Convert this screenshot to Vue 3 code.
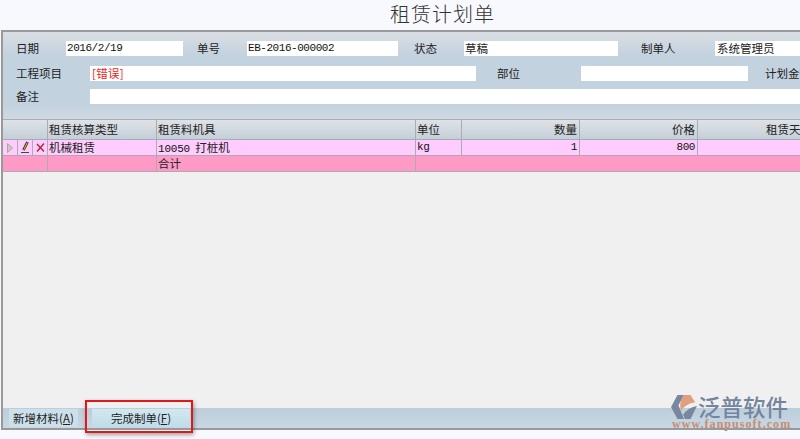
<script setup>
const columns = [15, 15, 15, 109, 259, 46, 118, 118, 117]
const gridTemplate = columns.map((w) => w + 'px').join(' ')
</script>

<template>
  <div class="page">
    <h1 class="title">租赁计划单</h1>
    <div class="window">
      <section class="form">
        <div class="row row-1">
          <span class="label w50">日期</span>
          <span class="field f1 mono">2016/2/19</span>
          <span class="label l2">单号</span>
          <span class="field f2 mono">EB-2016-000002</span>
          <span class="label l3">状态</span>
          <span class="field f3">草稿</span>
          <span class="label l4">制单人</span>
          <span class="field f4">系统管理员</span>
        </div>
        <div class="row row-2">
          <span class="label w74">工程项目</span>
          <span class="field f5 error">[错误]</span>
          <span class="label l5">部位</span>
          <span class="field f6"></span>
          <span class="label l6">计划金额</span>
        </div>
        <div class="row row-3">
          <span class="label w74">备注</span>
          <span class="field f7"></span>
        </div>
      </section>

      <section class="grid" :style="{ gridTemplateColumns: gridTemplate }">
        <div class="cell head span3"></div>
        <div class="cell head">租赁核算类型</div>
        <div class="cell head">租赁料机具</div>
        <div class="cell head">单位</div>
        <div class="cell head right">数量</div>
        <div class="cell head right">价格</div>
        <div class="cell head right">租赁天数</div>

        <div class="cell data icon">
          <svg width="10" height="12" viewBox="0 0 10 12"><path d="M2.5 1.5 L7.5 6 L2.5 10.5 Z" fill="#c9ccbc" stroke="#a8a89c" /></svg>
        </div>
        <div class="cell data icon">
          <svg width="12" height="13" viewBox="0 0 12 13"><path d="M8.5 1 L4.5 9" stroke="#222" stroke-width="2.6" /><path d="M8.4 1.4 L4.8 8.6" stroke="#f5dc20" stroke-width="1" /><path d="M2 11.5 H10" stroke="#444" stroke-width="1" /></svg>
        </div>
        <div class="cell data icon">
          <svg width="11" height="11" viewBox="0 0 11 11"><path d="M2 2 L9 9.5 M9 1.5 L2 9.5" stroke="#b02028" stroke-width="1.3" /></svg>
        </div>
        <div class="cell data">机械租赁</div>
        <div class="cell data"><span class="mono code">10050</span>&nbsp;&nbsp;打桩机</div>
        <div class="cell data mono">kg</div>
        <div class="cell data right mono">1</div>
        <div class="cell data right mono">800</div>
        <div class="cell data"></div>

        <div class="cell total span3"></div>
        <div class="cell total"></div>
        <div class="cell total">合计</div>
        <div class="cell total span4"></div>
      </section>

      <div class="blank"></div>

      <footer class="footer">
        <button class="btn btn-add">新增材料(<u>A</u>)</button>
        <button class="btn btn-done">完成制单(<u>F</u>)</button>
      </footer>
    </div>

    <div class="highlight"></div>

    <div class="logo">
      <svg class="logo-mark" width="28" height="26" viewBox="0 0 30 28">
        <path d="M8 1 H15 L9 12 L15 27 H8 L1 14 Z" fill="#76879f" />
        <path d="M15 1 H22 L27 9 C21 10 15 13 12 18 C10 12 11 6 15 1 Z" fill="#e0a080" />
        <path d="M14 22 C18 17 23 14 29 13 L22 27 H16 Z" fill="#76879f" />
      </svg>
      <span class="logo-name">泛普软件</span>
      <span class="logo-url">www.fanpusoft.com</span>
    </div>
  </div>
</template>

<style>
html, body {
  margin: 0;
  overflow: hidden;
}
</style>

<style scoped>
.page {
  position: relative;
  width: 800px;
  height: 439px;
  overflow: hidden;
  background: #f8f9ff;
  font-family: "Noto Sans CJK SC", "Liberation Sans", sans-serif;
  font-size: 11.5px;
  color: #222;
}
.title {
  margin: 0;
  height: 30px;
  padding-left: 390px;
  font-size: 20px;
  font-weight: 300;
  line-height: 27px;
  letter-spacing: 1px;
  color: #333;
}
.window {
  display: flex;
  flex-direction: column;
  width: 1000px;
  height: 396px;
  margin-left: 1px;
  border: solid #999;
  border-width: 2px 0 2px 2px;
  box-sizing: content-box;
  background: #f0f0f0;
}
.form {
  display: flex;
  flex-direction: column;
  flex: none;
  height: 88px;
  box-sizing: border-box;
  padding-top: 9px;
  background: linear-gradient(#dadee3 0, #c3d2df 24px, #c3d2df 72px, #cfd9e2 100%);
  border-bottom: 1px solid #a8aeb4;
}
.row {
  display: flex;
  align-items: center;
  height: 15px;
}
.row-2 { margin-top: 10px; }
.row-3 { margin-top: 8px; }
.label {
  flex: none;
  box-sizing: border-box;
  padding-left: 13px;
  color: #222;
  line-height: 15px;
  white-space: nowrap;
}
.w50 { width: 63px; }
.w74 { width: 87px; }
.l2 { width: 64px; padding-left: 14px; }
.l3 { width: 66px; padding-left: 16px; }
.l4 { width: 97px; padding-left: 23px; }
.l5 { width: 105px; padding-left: 21px; }
.l6 { width: 100px; padding-left: 17px; }
.field {
  flex: none;
  box-sizing: border-box;
  height: 15px;
  line-height: 15px;
  background: #fff;
  padding-left: 1px;
  overflow: hidden;
  white-space: nowrap;
}
.f1 { width: 117px; }
.f2 { width: 151px; }
.f3 { width: 154px; }
.f4 { width: 120px; padding-left: 2px; }
.f5 { width: 386px; padding-left: 2px; color: #f02020; letter-spacing: 0.3px; }
.f6 { width: 167px; }
.f7 { width: 800px; }
.mono {
  font-family: "Liberation Mono", monospace;
  font-size: 11px;
  letter-spacing: -0.45px;
  color: #111;
}
.code { letter-spacing: -0.2px; }
.grid {
  display: grid;
  flex: none;
  grid-template-rows: 20px 16px 16px;
}
.cell {
  box-sizing: border-box;
  padding: 0 2px 0 1px;
  border-right: 1px solid #a9adb0;
  border-bottom: 1px solid #a9adb0;
  white-space: nowrap;
  overflow: hidden;
}
.head {
  line-height: 19px;
  color: #222;
  background: linear-gradient(#dfe2e6, #c4cfd9);
}
.data {
  line-height: 15px;
  background: #ffccff;
}
.total {
  line-height: 15px;
  background: #ff99c6;
}
.icon {
  display: flex;
  align-items: center;
  justify-content: center;
  padding: 0;
}
.right { text-align: right; }
.span3 { grid-column: span 3; }
.span4 { grid-column: span 4; }
.blank { flex: 1; }
.footer {
  display: flex;
  flex: none;
  align-items: flex-start;
  gap: 14px;
  height: 20px;
  box-sizing: border-box;
  padding: 1px 0 0 6px;
  background: linear-gradient(#bccedb, #c8d7e2);
}
.btn {
  height: 18px;
  padding: 0;
  border: 0;
  font: inherit;
  line-height: 18px;
  color: #222;
  background: #cbe0ea;
}
.btn-add { width: 69px; }
.btn-done { width: 98px; background: linear-gradient(#d2e8f0, #bfdce8); }
.highlight {
  position: absolute;
  left: 85px;
  top: 400px;
  width: 108px;
  height: 33px;
  box-sizing: border-box;
  border: 2px solid #e01818;
  box-shadow: 1px 2px 4px rgba(0, 0, 0, 0.35);
}
.logo {
  position: absolute;
  left: 670px;
  top: 392px;
  width: 125px;
  height: 40px;
}
.logo-mark {
  position: absolute;
  left: 0;
  top: 2px;
}
.logo-name {
  position: absolute;
  left: 28px;
  top: 3px;
  font-size: 22.5px;
  font-weight: 500;
  line-height: 22px;
  white-space: nowrap;
  color: #74859f;
}
.logo-url {
  position: absolute;
  left: 2px;
  top: 26px;
  font-family: "Liberation Serif", serif;
  font-size: 12px;
  font-weight: 700;
  letter-spacing: 1.05px;
  line-height: 12px;
  white-space: nowrap;
  color: #c98c74;
}
</style>
